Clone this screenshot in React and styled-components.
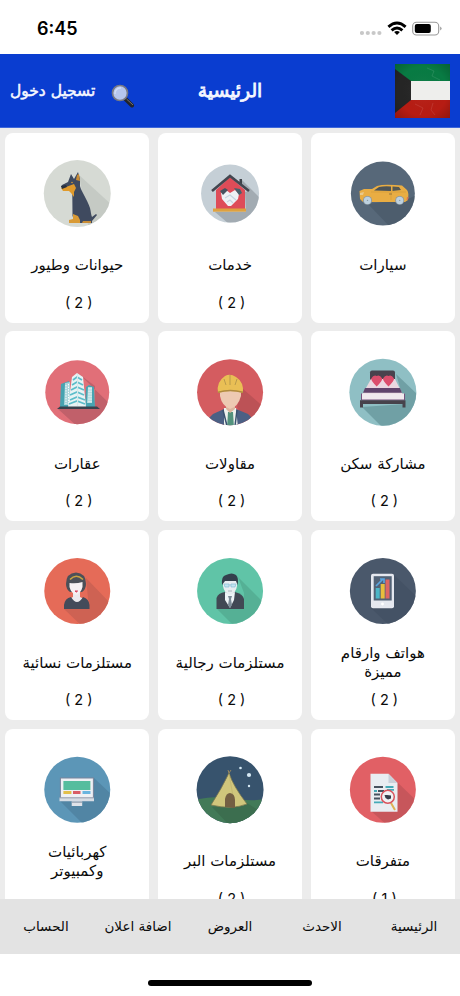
import React from "react";
import styled, { createGlobalStyle } from "styled-components";

const GlobalStyle = createGlobalStyle`
  * {
    box-sizing: border-box;
  }
  body {
    margin: 0;
    background: #fff;
    font-family: "DejaVu Sans", sans-serif;
    color: #0b0b0b;
  }
`;

const Screen = styled.div`
  width: 460px;
  height: 996px;
  display: flex;
  flex-direction: column;
  overflow: hidden;
  background: #fff;
`;

const StatusBar = styled.div`
  height: 54px;
  flex: none;
  display: flex;
  justify-content: space-between;
  padding: 19px 18px 0 37px;
  .time {
    font-family: Inter, sans-serif;
    font-weight: 600;
    font-size: 18px;
    line-height: 20px;
    color: #000;
  }
`;

const Header = styled.header`
  height: 74px;
  flex: none;
  display: grid;
  grid-template-columns: 1fr auto 1fr;
  align-items: center;
  padding: 0 10px;
  background: #0a3dd0;
  border-bottom: 1px solid #3f68da;
  color: #f5f7ff;
  .left {
    display: flex;
    align-items: center;
    gap: 16px;
  }
  .lens {
    margin-top: 10px;
  }
  .flag {
    justify-self: end;
  }
`;

const HeaderText = styled.span`
  white-space: nowrap;
  direction: rtl;
  font-size: ${(p) => p.$size}px;
  line-height: 20px;
  -webkit-text-stroke: ${(p) => p.$stroke}px currentColor;
`;

const List = styled.main`
  flex: none;
  height: 771px;
  overflow: hidden;
  direction: rtl;
  display: grid;
  grid-template-columns: repeat(3, 144.3px);
  grid-auto-rows: 190px;
  gap: 8.7px 8.5px;
  padding: 4.6px 5px 0;
  background: #ececec;
`;

const Card = styled.div`
  display: flex;
  flex-direction: column;
  align-items: center;
  padding-top: 25px;
  background: #fff;
  border-radius: 8px;
`;

const Art = styled.svg`
  width: 72px;
  height: 72px;
  flex: none;
  display: block;
  background: ${(p) => p.$bg};
  clip-path: circle(${(p) => p.$r}px at center);
  .shade {
    opacity: 0.75;
  }
`;

const Name = styled.div`
  height: 40px;
  margin-top: 16px;
  display: flex;
  align-items: center;
  justify-content: center;
  text-align: center;
  white-space: pre-line;
  font-size: 15px;
  line-height: 18.5px;
`;

const Count = styled.div`
  direction: ltr;
  margin: 7px 0 0 3px;
  font-family: Inter, sans-serif;
  font-size: 14.5px;
  line-height: 20px;
`;

const TabBar = styled.nav`
  height: 55px;
  flex: none;
  display: grid;
  grid-template-columns: repeat(5, 1fr);
  direction: rtl;
  padding-bottom: 2px;
  background: #e3e3e3;
  a {
    display: flex;
    align-items: center;
    justify-content: center;
    font-size: 13.5px;
    white-space: nowrap;
  }
`;

const HomeBar = styled.div`
  width: 164px;
  height: 6px;
  margin: 26px auto 0;
  border-radius: 3px;
  background: #000;
`;

// every drawing has its origin in the centre of the circle
function Icon({ bg, r = 33, shade, shadeColor, children }) {
  return (
    <Art $bg={bg} $r={r} viewBox="-36 -36 72 72">
      {shade && <path className="shade" d={shade} fill={shadeColor} />}
      {children}
    </Art>
  );
}

const Dog = () => (
  <Icon bg="#d6dad4" r={33.5} shade="M2-19L36 12V36H12Z" shadeColor="#bfc4bf">
    <path d="M-6-20L-3-15L1-22L3-15L3-8C4-3 10 5 13 14C14 18 14 21 15 23L19 20L20 21L15 27V29H-1L-4.5 22L-4.7 0L-6-3L-12-6L-16-7L-15-9L-9-12Z" fill="#3f4a5f" />
    <path d="M0-19L2-20L3-13L-1-14Z" fill="#c88b34" />
    <path d="M-16-6L-11-7L-3-10L-1-6L-3-2V3L-6-1L-8-3L-14-3Z" fill="#e09a2b" />
    <path d="M-16-8L-11-9L-10-7L-15-5Z" fill="#27303f" />
    <path d="M-4 20L1 22L3 26V29H-8V26L-4 25Z" fill="#d99a35" />
    <path d="M6 27H14V29H5Z" fill="#c88b34" />
    <circle cx="-5" cy="-11.5" r=".8" fill="#d99a35" />
  </Icon>
);

const House = () => (
  <Icon bg="#c5cfd6" r={29} shade="M11-15L36 10V36H6L-15 18H16L15-2L19-3L9-12Z" shadeColor="#969fa5">
    <path d="M0-17L15-4V15H-14V-4Z" fill="#de4c58" />
    <path d="M9.5-15H12V-8L9.5-10Z" fill="#3d4148" />
    <path d="M-18-3L0-18L19-3" fill="none" stroke="#43464f" strokeWidth="2.6" />
    <rect x="-17" y="14.5" width="33" height="3.2" fill="#dea13f" />
    <path d="M-9-1L-4-4L0-1L5-4L9 0L8 5L1 12L-2 12L-8 5Z" fill="#edf1f5" />
    <path d="M-10-3L-5-6L-2-4L-7 1Z" fill="#47525f" />
    <path d="M4-6L10-5L12-1L9 1Z" fill="#46616c" />
    <path d="M-5 4L0 1L6 6M-3 8L0 6L3 9" fill="none" stroke="#c6d5e0" strokeWidth="1.2" />
  </Icon>
);

const Car = () => (
  <Icon bg="#576879" r={32} shade="M-15 10L10 36H36V0L25 5Z" shadeColor="#4a5a6a">
    <path d="M-23.5-3L-19-5L-11-5L-6-8Q0-10 12-9L19-8.5L24-4Q26-2 25 6L22 8H-20L-23 5Z" fill="#e9ad43" />
    <path d="M-9-3.5L-4-7Q1-8 8-7.5V-3Z" fill="#4c5459" />
    <path d="M9.5-7.5L16-7L18-4L9.5-3Z" fill="#555853" />
    <path d="M-12-2H23M8-2V6" fill="none" stroke="#d59a36" strokeWidth=".6" />
    <path d="M6 0H9" stroke="#886a39" strokeWidth=".8" />
    <path d="M-23-1L-19-2L-20 1H-23Z" fill="#e9ca8d" />
    <path d="M24 3L25.5 3L25 6L23.5 6Z" fill="#dc7751" />
    {[-15.5, 16.7].map((x) => (
      <g key={x}>
        <circle cx={x} cy="6.4" r="4.5" fill="#8b99a3" />
        <circle cx={x} cy="6.4" r="3.6" fill="#bed1df" />
        <circle cx={x} cy="6.4" r=".7" fill="#8b9ba6" />
      </g>
    ))}
  </Icon>
);

const Towers = () => (
  <Icon bg="#e16f78" r={32} shade="M2-18L36 15V36H2L-19 17L18 14L18-6Z" shadeColor="#b55b66">
    <path d="M-16-8L-8-11V15H-17Z" fill="#47a3b0" />
    <path d="M-12-9L-7-10V13H-13Z" fill="#a9d5db" />
    <path d="M-11-7V12M-8.5-8V12" stroke="#fff" strokeWidth="1" strokeDasharray="1.4 1.2" />
    <path d="M9-5L12-7L17-5L18 15H8Z" fill="#48a4b2" />
    <path d="M11-5H15V11H10Z" fill="#b4dce0" />
    <path d="M12-4V11M14-4V11" stroke="#fff" strokeWidth=".8" strokeDasharray="1.4 1.2" />
    <path d="M-5-15L0-19L6-15L9 15H-9Z" fill="#e8f3f4" />
    <path d="M-4-12L0-15L5-12M-5-7L0-10L6-7M-6-2L0-5L7-2M-7 3L0 0L7 3M-7 8L0 5L8 8M-8 12L0 9L8 12" fill="none" stroke="#5cbdca" strokeWidth="1.7" />
    <path d="M.5-18V14" stroke="#d8e8ea" strokeWidth="1.2" />
    <path d="M-17 14.5H20L23 17H-20Z" fill="#38434e" />
  </Icon>
);

const Builder = () => (
  <Icon bg="#d45c60" shade="M12-4L36 17V36H18L7 15Z" shadeColor="#b44f53">
    <path d="M-22 27L-17 22L-6 17H6L18 22L24 28V36H-22Z" fill="#4b6084" />
    <path d="M-6 16H6L8 36H-6Z" fill="#eef1ee" />
    <path d="M-2 20H3L4 36H-3Z" fill="#53927d" />
    <path d="M-7 18L-3 34M7 18L5 34" stroke="#39516f" strokeWidth="1.5" />
    <path d="M-4 9H5V17L0 21L-4 17Z" fill="#dcb59e" />
    <path d="M-10-2H11V4Q8 15 0 17Q-8 14-10 4Z" fill="#edc9b2" />
    <path d="M-12 1Q-14-10-5-16Q0-19 6-15Q14-10 13 1Q0-3-12 1Z" fill="#e9bf55" />
    <path d="M-6-13L-4-7M0-17V-7M7-13L5-7" stroke="#b3954b" strokeWidth=".9" />
    <path d="M-12-.5Q0-4 13-.5V1Q0-2.5-12 1Z" fill="#ae8a40" />
  </Icon>
);

const Bed = () => (
  <Icon bg="#8fbfc4" r={33.5} shade="M13-18L36 4V36H0L-21 15L22 12Z" shadeColor="#65969b">
    <rect x="-13" y="-21.5" width="25" height="10" rx="2" fill="#49424d" />
    <path d="M-12-13H12L20 3H-21Z" fill="#ead8e0" />
    <path d="M-18-4H17L19 .7H-20Z" fill="#61446c" />
    <rect x="-21" y="1.5" width="42.5" height="6.7" fill="#f1e9ee" />
    <path d="M-21.5 1.5V8H21.5V1.5" fill="none" stroke="#74517c" />
    <path d="M-23 8.3H22.5V15.5H19.5V12H-20V15.5H-23Z" fill="#47424b" />
    {[-6.3, 5.5].map((x) => (
      <path key={x} transform={`translate(${x} -11.5)`} d="M0-4.5Q-3-6-5.5-2Q-6 0 0 6Q6 0 5.5-2Q3-6 0-4.5Z" fill="#db4e6c" />
    ))}
  </Icon>
);

const Woman = () => (
  <Icon bg="#e56b58" shade="M9-13L36 15V36H6L-13 18L12 17Z" shadeColor="#c65f52">
    <path d="M-11-7Q-11-18-1-18.5Q9-18 9-7Q9-2 5 1H-7Q-11-2-11-7Z" fill="#4b5058" />
    <path d="M-4 0H3V6L7 8L0 14L-8 8L-4 6Z" fill="#ece9ed" />
    <path d="M-7.5-8Q-1-7 5.5-9V-4Q4 2-1 4Q-6 2-7.5-4Z" fill="#f6f1f3" />
    <path d="M-7-11.5Q-1-18 6-11.5" fill="none" stroke="#c9a442" strokeWidth="1.6" />
    <path d="M-13 18V14Q-12 7-6 6Q0 16 6 6Q12 8 12.5 14V18Z" fill="#444b5a" />
    <path d="M-2 0H.6L-.7 1.1Z" fill="#d74661" stroke="#d74661" />
  </Icon>
);

const Man = () => (
  <Icon bg="#60c4a7" shade="M8-14L36 14V36H5L-13 18L14 17V2Z" shadeColor="#52a98f">
    <path d="M-13.5 18V7Q-12 2-5 1H5Q13 3 14 8V18Z" fill="#414854" />
    <path d="M-5 1L0 3L5 1L4 9L0 17L-5 9Z" fill="#eef4f7" />
    <path d="M-2 5H2L1 8L2 14L0 17L-2 14L-1 8Z" fill="#7b8a96" />
    <path d="M-7-11H7V-5Q6 2 0 4Q-6 2-7-5Z" fill="#e8edf1" />
    <path d="M-8-6Q-9-15-4-16Q2-19 6-16Q9-13 7.5-6L6-10H-5Z" fill="#34404d" />
    <path d="M-6-7H-1V-4H-5ZM1-7H6L5-4H1ZM-1-6H1" fill="#c4e4f0" stroke="#8bbfd5" strokeWidth=".7" />
    <path d="M-2 0H2" stroke="#9ca8b0" strokeWidth=".8" />
  </Icon>
);

const Phone = () => (
  <Icon bg="#4a586b" shade="M11-16L36 8V36H8L-12 17Z" shadeColor="#435063">
    <rect x="-12" y="-17.3" width="23" height="34.5" rx="2" fill="#e5e8ef" />
    <rect x="-9.3" y="-14.8" width="18" height="24.3" fill="#526276" />
    <rect x="-7.3" y="-3" width="4" height="10.5" fill="#4cb6c7" />
    <rect x="-2.3" y="-7" width="4" height="14.5" fill="#e9bd3c" />
    <rect x="2.5" y="-11.5" width="4" height="19" fill="#df6562" />
    <path d="M-7-5L0-12M-3-12H1V-8" fill="none" stroke="#5aa5df" strokeWidth="1.7" />
    <circle cx="-.5" cy="13" r="1.4" fill="#fff" />
  </Icon>
);

const Computer = () => (
  <Icon bg="#5c96b7" shade="M17-12L36 6V36H8L-17 11Z" shadeColor="#4d7f9d">
    <rect x="-16.6" y="-12" width="33" height="21" fill="#eef0f4" stroke="#79849b" />
    <rect x="-13.6" y="-9" width="27" height="9" fill="#55bd9e" />
    <rect x="-13.6" y="1" width="8" height="3" fill="#e2bf4a" />
    <rect x="-4" y="1" width="7.5" height="3" fill="#d95d66" />
    <rect x="5.5" y="1" width="8" height="3" fill="#68b4df" />
    <path d="M-17.5 7.5H17V11.3H-17.5Z" fill="#d6dce4" />
    <path d="M-17.5 7.8H17" stroke="#82899a" strokeWidth=".8" />
    <rect x="-5.3" y="11.3" width="10.5" height="4.7" fill="#dfe3e9" />
    <path d="M-5.3 12.2H5.2" stroke="#8b99a8" />
  </Icon>
);

const Tent = () => (
  <Icon bg="#37536d" r={33.5}>
    <path d="M-36 10Q-15 5 0 8Q20 12 36 9V36H-36Z" fill="#427a58" />
    <path d="M-18 17L0 36H16L36 25L17 13Z" fill="#3c6e4f" />
    <path d="M-1-17Q3-4 17 14Q2 20-19 15Q-8-2-1-17Z" fill="#d0c67c" stroke="#7c7851" strokeWidth=".8" />
    <path d="M-1-16L5 17" stroke="#c0b36e" strokeWidth=".7" />
    <path d="M-5 17V9Q-4 3 0 3Q5 4 5 10V18Z" fill="#745f43" />
    <path d="M-1-17L-2-20M-1-17L1-20" stroke="#988860" />
    <g fill="#d7eaf5">
      <circle cx="10.5" cy="-22" r="1.3" />
      <circle cx="19" cy="-15" r="2.1" />
      <circle cx="19" cy="-4" r="1.2" />
    </g>
  </Icon>
);

const Report = () => (
  <Icon bg="#e16065" shade="M14-8L36 13V36H5L-12 21Z" shadeColor="#bd5358">
    <path d="M-12.5-16.3H5.5L14.5-7V21.7H-12.5Z" fill="#e9edf2" />
    <path d="M5.5-16.3V-7H14.5Z" fill="#cad1da" />
    <path d="M-9-3H0M-5 1H1M-9 4.5H-3M-9 8.5H-3" stroke="#46525f" strokeWidth="1.8" />
    <path d="M2.5-3H10.5M-9 1H-6M4-.2H11M-9 12.4H0" stroke="#45aab7" strokeWidth="1.8" />
    <path d="M8 13L12 20" stroke="#deb156" strokeWidth="2" />
    <circle cx="4.8" cy="6.8" r="6.5" fill="#eff1f4" stroke="#d9535d" strokeWidth="1.5" />
    <path d="M1.5 5H4L8 5.5V8.5L5 9.5L2.5 8Z" fill="#353d4b" />
  </Icon>
);

const Lens = () => (
  <svg className="lens" width="24" height="24" viewBox="0 0 24 24">
    <path d="M14.5 15L21 21.5" stroke="#22242b" strokeWidth="4" strokeLinecap="round" />
    <path d="M15.5 15L22 21" stroke="#77716f" strokeWidth="1" />
    <circle cx="9" cy="9" r="7.5" fill="#b5c6ee" stroke="#777984" strokeWidth="1.7" />
    <path d="M4 10A5.5 5.5 0 0 1 10 4" fill="none" stroke="#d1ddf6" strokeWidth="1.4" />
  </svg>
);

const Flag = () => (
  <svg className="flag" width="55" height="54" viewBox="0 0 55 54">
    <defs>
      <radialGradient id="wear" r=".75">
        <stop offset="0" stopColor="#fff" stopOpacity=".06" />
        <stop offset=".6" stopColor="#000" stopOpacity="0" />
        <stop offset="1" stopColor="#000" stopOpacity=".25" />
      </radialGradient>
    </defs>
    <path d="M0 0H55V18H0Z" fill="#087b43" />
    <path d="M0 35H55V54H0Z" fill="#b71c13" />
    <path d="M0 5L16 17V36L0 49Z" fill="#252525" />
    <rect width="55" height="54" fill="url(#wear)" />
    <path d="M16 17H55V36H16Z" fill="#eeeeec" />
    <path d="M32 4L39 7L37 12L45 16M20 40L28 44L25 51M38 39L36 46L40 51" fill="none" stroke="#fff" strokeOpacity=".1" />
  </svg>
);

const StatusIcons = () => (
  <svg width="82" height="20" viewBox="360 19 82 20">
    <g fill="#c8c8c8">
      {[362, 367.8, 373.6, 379.4].map((x) => (
        <circle key={x} cx={x} cy="33" r="2.1" />
      ))}
    </g>
    <g fill="none" stroke="#000" strokeWidth="2.9">
      <path d="M388.4 26.9Q397 19.2 405.6 26.9" />
      <path d="M391.6 30.4Q397 25.6 402.4 30.4" />
    </g>
    <path d="M394.1 32.1Q397 29.9 399.9 32.1L397 35Z" />
    <rect x="412.7" y="22.2" width="26" height="12.8" rx="3.8" fill="#fff" stroke="#999" strokeWidth="1.1" />
    <rect x="414.8" y="24.1" width="16" height="9" rx="2" />
    <path d="M440.2 26.5Q443 28.5 440.2 30.5Z" fill="#999" />
  </svg>
);

const categories = [
  { name: "سيارات", icon: Car },
  { name: "خدمات", icon: House, count: 2 },
  { name: "حيوانات وطيور", icon: Dog, count: 2 },
  { name: "مشاركة سكن", icon: Bed, count: 2 },
  { name: "مقاولات", icon: Builder, count: 2 },
  { name: "عقارات", icon: Towers, count: 2 },
  { name: "هواتف وارقام\nمميزة", icon: Phone, count: 2 },
  { name: "مستلزمات رجالية", icon: Man, count: 2 },
  { name: "مستلزمات نسائية", icon: Woman, count: 2 },
  { name: "متفرقات", icon: Report, count: 1 },
  { name: "مستلزمات البر", icon: Tent, count: 2 },
  { name: "كهربائيات\nوكمبيوتر", icon: Computer },
];

const tabs = ["الرئيسية", "الاحدث", "العروض", "اضافة اعلان", "الحساب"];

function App() {
  return (
    <Screen>
      <GlobalStyle />
      <StatusBar>
        <span className="time">6:45</span>
        <StatusIcons />
      </StatusBar>
      <Header>
        <div className="left">
          <HeaderText $size={15.5} $stroke={0.5}>
            تسجيل دخول
          </HeaderText>
          <Lens />
        </div>
        <HeaderText $size={18.8} $stroke={0.8}>
          الرئيسية
        </HeaderText>
        <Flag />
      </Header>
      <List>
        {categories.map(({ name, icon: Picture, count }) => (
          <Card key={name}>
            <Picture />
            <Name>{name}</Name>
            {count && <Count>( {count} )</Count>}
          </Card>
        ))}
      </List>
      <TabBar>
        {tabs.map((tab) => (
          <a key={tab}>{tab}</a>
        ))}
      </TabBar>
      <HomeBar />
    </Screen>
  );
}

export default App;
